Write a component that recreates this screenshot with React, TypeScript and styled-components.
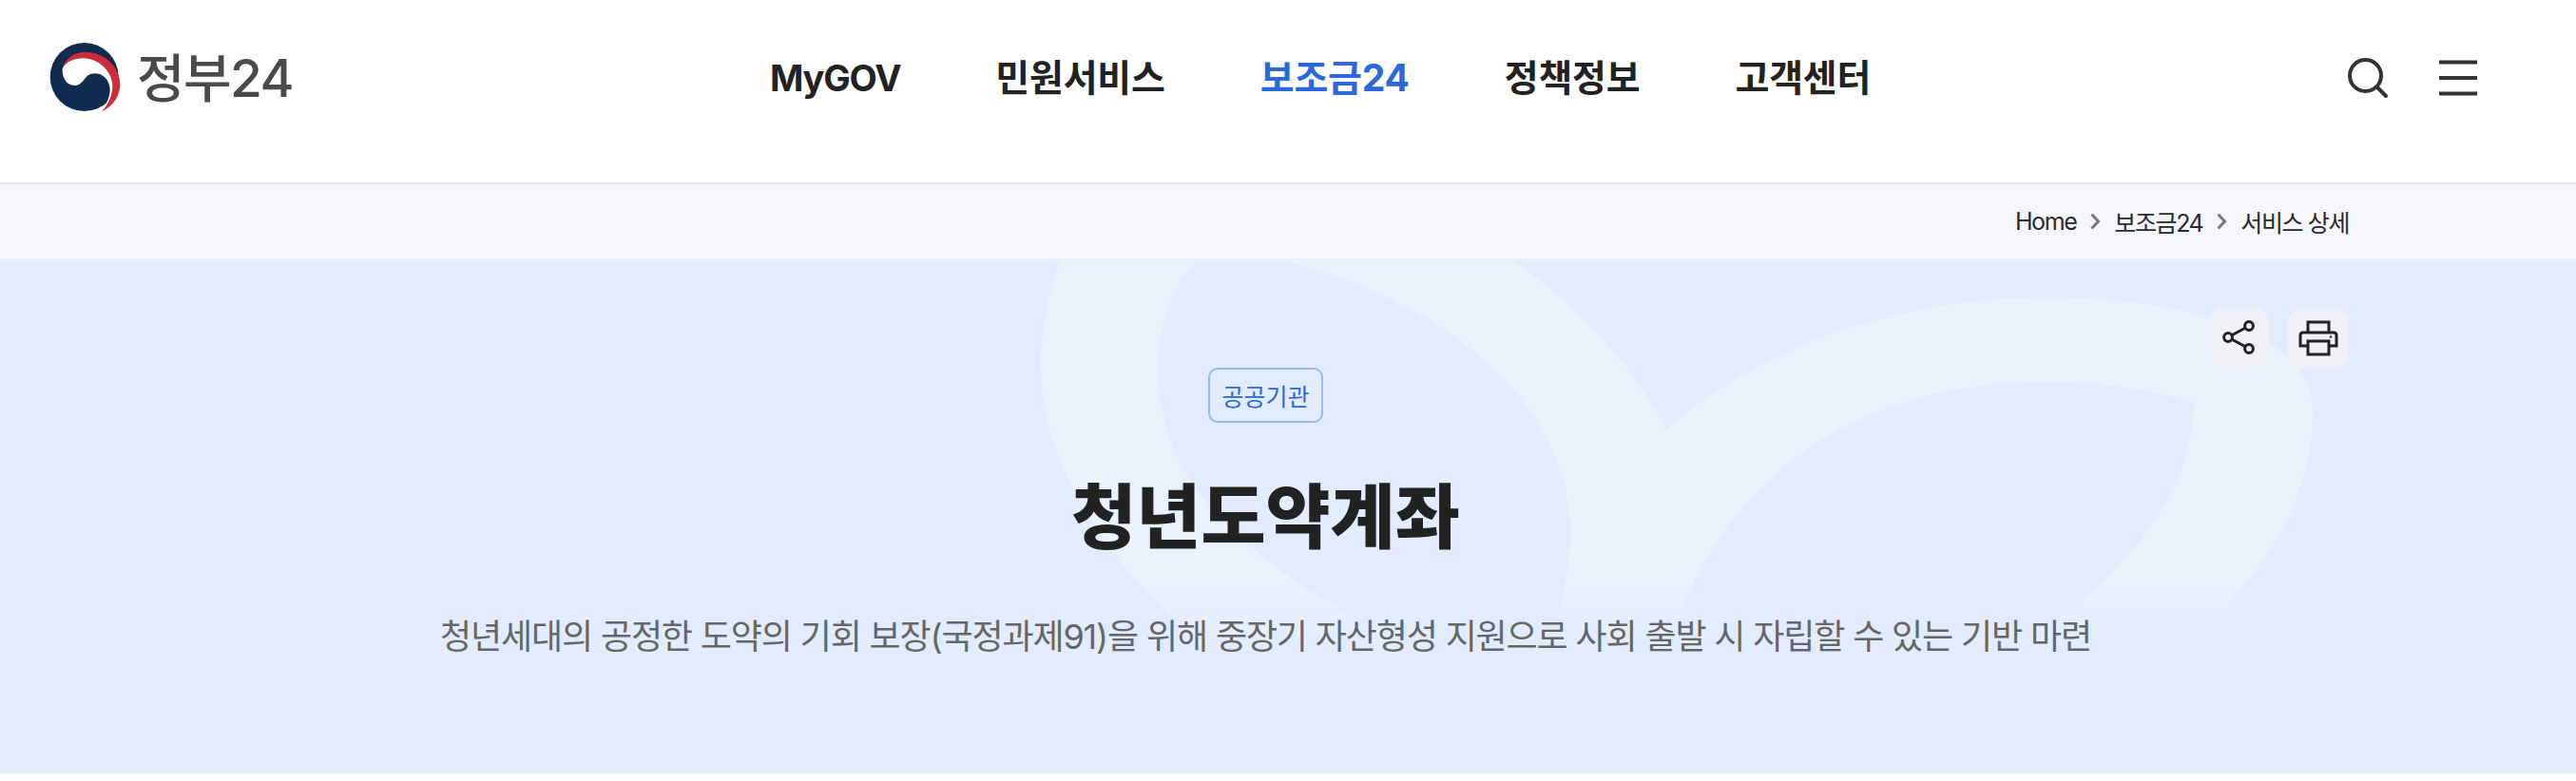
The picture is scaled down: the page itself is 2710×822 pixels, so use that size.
import React from "react";
import styled, { createGlobalStyle } from "styled-components";

const Global = createGlobalStyle`
  html, body { margin: 0; padding: 0; background: #fff; }
  body { font-family: Inter, "Noto Sans CJK KR", "Noto Sans", sans-serif; }
  * { box-sizing: border-box; }
`;

const Page = styled.div`
  width: 2710px;
  overflow: hidden;
`;

const Header = styled.header`
  display: flex;
  align-items: center;
  height: 194px;
  padding: 40px 103px 68px 45px;
  background: #fff;
  border-bottom: 2px solid #e4e5ec;
`;

const Logo = styled.a`
  display: flex;
  align-items: center;
  gap: 9px;
  width: 765px;
  flex: none;
  color: #4a4a4c;
`;

const LogoText = styled.span`
  font-size: 55px;
  font-weight: 500;
  line-height: 84px;
  letter-spacing: -1.6px;
`;

const Nav = styled.nav`
  display: flex;
  align-items: center;
  gap: 100px;
`;

const NavItem = styled.a<{ $active?: boolean; $latin?: boolean }>`
  font-size: ${(p) => (p.$latin ? 38 : 39)}px;
  font-weight: 700;
  line-height: 50px;
  letter-spacing: ${(p) => (p.$latin ? -1.2 : -0.2)}px;
  color: ${(p) => (p.$active ? "#2b68dc" : "#222")};
`;

const HeaderActions = styled.div`
  display: flex;
  align-items: center;
  gap: 52px;
  margin-left: auto;
`;

const Crumbs = styled.div`
  display: flex;
  align-items: center;
  justify-content: flex-end;
  gap: 13px;
  height: 80px;
  padding-right: 239px;
  background: #f5f6fa;
  border-bottom: 2px solid #eeeff3;
  font-size: 25px;
  letter-spacing: -1.4px;
  color: #2a2a2e;
`;

const Hero = styled.section`
  position: relative;
  display: flex;
  flex-direction: column;
  height: 540px;
  padding: 50px 239px 0 192px;
  background: #e2ecfe;
  overflow: hidden;
`;

const Watermark = styled.svg`
  position: absolute;
  left: 0;
  top: 0;
`;

const HeroActions = styled.div`
  position: relative;
  display: flex;
  justify-content: flex-end;
  gap: 20px;
`;

const RoundButton = styled.button`
  display: flex;
  align-items: center;
  justify-content: center;
  width: 64px;
  height: 64px;
  padding: 0;
  border: 0;
  border-radius: 16px;
  background: #eff1f6;
`;

const HeroBody = styled.div`
  position: relative;
  display: flex;
  flex-direction: column;
  align-items: center;
  margin-top: -1px;
`;

const Tag = styled.span`
  display: flex;
  align-items: center;
  height: 58px;
  padding: 0 12.5px;
  border: 2px solid #94bbf5;
  border-radius: 10px;
  font-size: 25px;
  color: #2b68dc;
`;

const Title = styled.h1`
  margin: 49px 0 0;
  font-size: 74px;
  font-weight: 800;
  line-height: 100px;
  letter-spacing: 0;
  color: #222;
`;

const Sub = styled.p`
  margin: 51px 0 0;
  font-size: 36px;
  font-weight: 400;
  line-height: 50px;
  letter-spacing: -1.15px;
  color: #666;
`;

const Y = 274;
const bandPath = `
  M1300 ${700 - Y}
  C1180 ${620 - Y} 1095 ${500 - Y} 1095 ${383 - Y}
  C1095 ${340 - Y} 1105 ${300 - Y} 1117 ${273 - Y}
  L1140 ${200 - Y}
  L1540 ${240 - Y}
  C1640 ${300 - Y} 1710 ${370 - Y} 1753 ${452 - Y}
  C1850 ${365 - Y} 2000 ${313 - Y} 2153 ${313 - Y}
  C2300 ${313 - Y} 2433 ${350 - Y} 2433 ${433 - Y}
  C2433 ${520 - Y} 2390 ${590 - Y} 2320 ${663 - Y}
  L2240 ${740 - Y}
  Z
  M1270 ${260 - Y}
  C1460 ${280 - Y} 1652 ${395 - Y} 1652 ${560 - Y}
  C1652 ${620 - Y} 1630 ${690 - Y} 1600 ${740 - Y}
  C1400 ${640 - Y} 1218 ${560 - Y} 1218 ${387 - Y}
  C1218 ${340 - Y} 1235 ${295 - Y} 1270 ${260 - Y}
  Z
  M1740 ${740 - Y}
  C1770 ${580 - Y} 1880 ${402 - Y} 2153 ${402 - Y}
  C2210 ${402 - Y} 2260 ${410 - Y} 2308 ${423 - Y}
  C2308 ${500 - Y} 2260 ${580 - Y} 2170 ${647 - Y}
  C2120 ${690 - Y} 2090 ${710 - Y} 2060 ${740 - Y}
  Z
`;

const Chevron = () => (
  <svg width="14" height="20" viewBox="0 0 14 20" fill="none">
    <path d="M3.5 2.5l7 7.5-7 7.5" stroke="#77777c" strokeWidth="3" />
  </svg>
);

export default function App() {
  return (
    <Page>
      <Global />
      <Header>
        <Logo>
          <svg width="90" height="84" viewBox="0 0 270 252">
            <circle cx="131" cy="123" r="108" fill="#0f2b50" />
            <path
              d="M62 97C68 68 98 44 134 44C196 44 244 92 244 146C244 182 222 216 185 233C209 206 222 176 220 146C216 102 176 66 130 64C98 63 72 76 62 97Z"
              fill="#cf2c37"
            />
            <path
              d="M62 97C72 76 98 63 130 64C176 66 216 102 220 146C222 176 209 206 185 233C202 208 213 184 212 160C210 130 188 112 165 112C146 112 138 122 130 132C122 142 114 150 100 150C76 150 60 126 62 97Z"
              fill="#fff"
            />
          </svg>
          <LogoText>정부24</LogoText>
        </Logo>
        <Nav>
          <NavItem $latin>MyGOV</NavItem>
          <NavItem>민원서비스</NavItem>
          <NavItem $active>보조금24</NavItem>
          <NavItem>정책정보</NavItem>
          <NavItem>고객센터</NavItem>
        </Nav>
        <HeaderActions>
          <svg width="44" height="44" viewBox="0 0 44 44" fill="none">
            <circle cx="19.5" cy="19.5" r="16.5" stroke="#333" strokeWidth="4" />
            <path d="M31.5 31.5L41 41" stroke="#333" strokeWidth="4" strokeLinecap="round" />
          </svg>
          <svg width="42" height="40" viewBox="0 0 42 40" fill="none">
            <path d="M1 3.5H41M1 20H41M1 36.5H41" stroke="#333" strokeWidth="4" />
          </svg>
        </HeaderActions>
      </Header>
      <Crumbs>
        <span>Home</span>
        <Chevron />
        <span>보조금24</span>
        <Chevron />
        <span>서비스 상세</span>
      </Crumbs>
      <Hero>
        <Watermark width="2710" height="540" viewBox="0 0 2710 540">
          <defs>
            <linearGradient id="fade" gradientUnits="userSpaceOnUse" x1="0" y1="343" x2="0" y2="406">
              <stop offset="0" stopColor="#fff" stopOpacity="0.3" />
              <stop offset="1" stopColor="#fff" stopOpacity="0" />
            </linearGradient>
          </defs>
          <path d={bandPath} fill="url(#fade)" fillRule="evenodd" />
        </Watermark>
        <HeroActions>
          <RoundButton>
            <svg width="36" height="40" viewBox="0 0 36 40" fill="none" stroke="#222" strokeWidth="3">
              <circle cx="29" cy="7" r="4.4" />
              <circle cx="7" cy="19" r="4.4" />
              <circle cx="29" cy="31" r="4.4" />
              <path d="M25 9.2L11 16.8M11 21.2L25 28.8" />
            </svg>
          </RoundButton>
          <RoundButton>
            <svg width="42" height="38" viewBox="0 0 42 38" fill="none" stroke="#222" strokeWidth="3">
              <path d="M10 13V2H32V13" />
              <path d="M10 27H2V16C2 14 3.5 13 5 13H37C38.5 13 40 14 40 16V27H32" />
              <path d="M10 22H32V36H10Z" />
              <circle cx="34" cy="17.5" r="1.2" fill="#222" stroke="none" />
            </svg>
          </RoundButton>
        </HeroActions>
        <HeroBody>
          <Tag>공공기관</Tag>
          <Title>청년도약계좌</Title>
          <Sub>청년세대의 공정한 도약의 기회 보장(국정과제91)을 위해 중장기 자산형성 지원으로 사회 출발 시 자립할 수 있는 기반 마련</Sub>
        </HeroBody>
      </Hero>
    </Page>
  );
}
